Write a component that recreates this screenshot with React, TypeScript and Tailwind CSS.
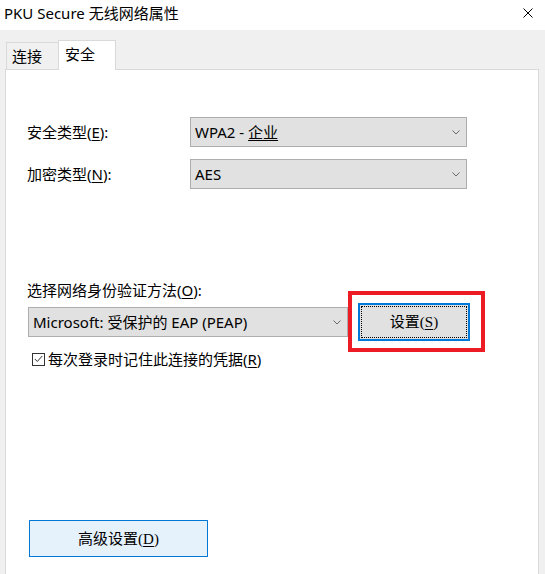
import React from "react";

const FONT = "'Noto Sans', 'Noto Sans CJK SC', sans-serif";
const BTN_FONT = "'Liberation Serif', 'Noto Sans CJK SC', serif";

function Chevron() {
  return (
    <svg width="8" height="5" viewBox="0 0 8 5" className="shrink-0">
      <polyline points="0.5,0.5 4,4 7.5,0.5" fill="none" stroke="#6b6b6b" strokeWidth="1" />
    </svg>
  );
}

function Combo({ children, w }: { children: React.ReactNode; w: string }) {
  return (
    <div
      className={`${w} h-[30px] bg-[#e1e1e1] border border-[#adadad] flex items-center justify-between pl-[4px] pr-[6px] text-[15px] leading-[20px] text-black`}
    >
      <span className="whitespace-nowrap h-[20px] flex items-center">{children}</span>
      <Chevron />
    </div>
  );
}

export default function App() {
  return (
    <div
      className="w-[545px] h-[574px] bg-[#f0f0f0] overflow-hidden text-black"
      style={{ fontFamily: FONT }}
    >
      {/* Title bar */}
      <div className="h-[30px] bg-white flex items-start justify-between pl-[4px] pr-[12px] pt-[3px]">
        <span className="text-[15px] leading-[20px] h-[20px] whitespace-nowrap">PKU Secure 无线网络属性</span>
        <svg width="10" height="10" viewBox="0 0 10 10" className="mt-[5px]">
          <line x1="0.5" y1="0.5" x2="9.5" y2="9.5" stroke="#000" strokeWidth="1" />
          <line x1="9.5" y1="0.5" x2="0.5" y2="9.5" stroke="#000" strokeWidth="1" />
        </svg>
      </div>

      {/* Tabs */}
      <div className="flex items-end pl-[6px] h-[39px]">
        <div className="w-[52px] h-[27px] border border-r-0 border-b-0 border-[#d9d9d9] bg-[#f0f0f0] pl-[5px] pt-[3px] text-[15px] leading-[20px]">
          连接
        </div>
        <div className="relative z-10 w-[58px] h-[30px] -mb-px border border-b-0 border-[#d9d9d9] bg-white pl-[6px] pt-[3px] text-[15px] leading-[20px]">
          安全
        </div>
      </div>

      {/* Panel */}
      <div className="ml-[5px] w-[534px] h-[600px] border border-[#d9d9d9] bg-white pl-[21px] pt-[47px]">
        <div className="flex items-center h-[30px]">
          <div className="w-[163px] h-[20px] flex items-center text-[15px] leading-[20px] whitespace-nowrap">
            <span>安全类型(<u className="underline-offset-2">E</u>):</span>
          </div>
          <Combo w="w-[277px]">
            <span>WPA2 - <u className="underline-offset-2">企业</u></span>
          </Combo>
        </div>
        <div className="flex items-center h-[30px] mt-[12px]">
          <div className="w-[163px] h-[20px] flex items-center text-[15px] leading-[20px] whitespace-nowrap">
            <span>加密类型(<u className="underline-offset-2">N</u>):</span>
          </div>
          <Combo w="w-[277px]">AES</Combo>
        </div>

        <div className="mt-[91px] h-[20px] flex items-center text-[15px] leading-[20px] whitespace-nowrap">
          <span>选择网络身份验证方法(<u className="underline-offset-2">O</u>):</span>
        </div>
        <div className="flex items-center h-[30px] mt-[7px] ml-[1px]">
          <Combo w="w-[320px]">Microsoft: 受保护的 EAP (PEAP)</Combo>
          <div className="relative ml-[10px]">
            <div className="w-[112px] h-[38px] border-2 border-[#0078d7] bg-[#e1e1e1] p-[1px]">
              <div
                className="w-full h-full border border-dotted border-black flex items-center justify-center text-[15px] leading-[20px]"
                style={{ fontFamily: BTN_FONT }}
              >
                <span>设置(<u className="underline-offset-2">S</u>)</span>
              </div>
            </div>
            <div className="absolute left-[-10px] top-[-12px] w-[137px] h-[61px] border-[4px] border-[#ed1c24] pointer-events-none" />
          </div>
        </div>

        <div className="flex items-center h-[20px] mt-[12px] ml-[5px]">
          <div className="w-[13px] h-[13px] border border-[#333333] bg-white flex items-center justify-center">
            <svg width="9" height="8" viewBox="0 0 9 8">
              <polyline points="0.8,4 3.3,6.5 8.2,1" fill="none" stroke="#333333" strokeWidth="1" />
            </svg>
          </div>
          <span className="ml-[3px] text-[15px] leading-[20px] whitespace-nowrap">
            每次登录时记住此连接的凭据(<u className="underline-offset-2">R</u>)
          </span>
        </div>

        <div className="mt-[151px] ml-[2px] w-[179px] h-[37px] border border-[#0078d7] bg-[#e5f1fb] flex items-center justify-center text-[15px] leading-[20px]"
          style={{ fontFamily: BTN_FONT }}
        >
          <span>高级设置(<u className="underline-offset-2">D</u>)</span>
        </div>
      </div>
    </div>
  );
}
